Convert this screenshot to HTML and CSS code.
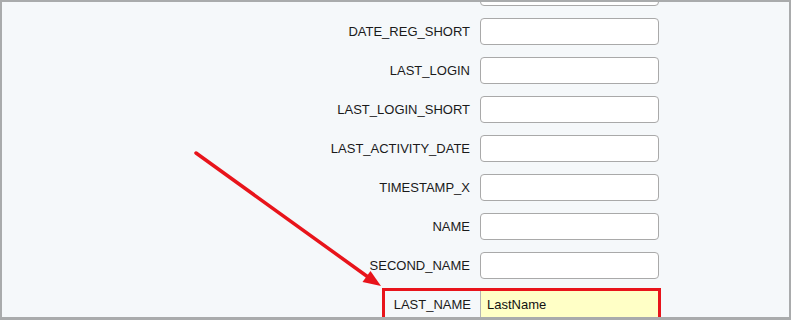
FILE: index.html
```html
<!DOCTYPE html>
<html lang="en">
<head>
    <meta charset="UTF-8">
    <meta name="viewport" content="width=device-width, initial-scale=1">
    <title>User fields</title>
    <link rel="stylesheet" href="styles.css">
</head>
<body>
<div class="frame">
    <div class="fields">
        <div class="row"><label></label><input type="text"></div>
        <div class="row"><label>DATE_REG_SHORT</label><input type="text"></div>
        <div class="row"><label>LAST_LOGIN</label><input type="text"></div>
        <div class="row"><label>LAST_LOGIN_SHORT</label><input type="text"></div>
        <div class="row"><label>LAST_ACTIVITY_DATE</label><input type="text"></div>
        <div class="row"><label>TIMESTAMP_X</label><input type="text"></div>
        <div class="row"><label>NAME</label><input type="text"></div>
        <div class="row"><label>SECOND_NAME</label><input type="text"></div>
        <div class="row row-marked">
            <div class="mark">
                <label>LAST_NAME</label><input type="text" value="LastName">
            </div>
        </div>
    </div>

    <!-- annotation arrow pointing at the marked field -->
    <svg class="arrow" width="791" height="320" viewBox="0 0 791 320">
        <line x1="196" y1="153" x2="368" y2="277" stroke="#e8141b" stroke-width="3.5" stroke-linecap="round"/>
        <polygon points="381,286 370.5,271 362.5,282" fill="#e8141b"/>
    </svg>
</div>
</body>
</html>
```

FILE: styles.css
```css
body {
    margin: 0;
    font-family: "Liberation Sans", Arial, sans-serif;
}

.frame {
    position: relative;
    width: 791px;
    height: 320px;
    box-sizing: border-box;
    border: 2px solid #a9abac;
    border-bottom-width: 3px;
    background-color: #f5f8fa;
    overflow: hidden;
}

.fields {
    margin-top: -29px;
}

.row {
    display: grid;
    grid-template-columns: 478px 179px;
    align-items: center;
    height: 39px;
}

.row label {
    text-align: right;
    padding-right: 10px;
    font-size: 13px;
    color: #1a1a1a;
}

.row input {
    box-sizing: border-box;
    height: 27px;
    width: 179px;
    margin: 0;
    border: 1px solid #a9a9a9;
    border-radius: 4px;
    background-color: #fff;
    font-family: inherit;
    font-size: 13px;
    padding: 0 6px;
}

/* highlighted field */
.row-marked {
    display: block;
}

.mark {
    display: flex;
    margin: 3px 0 0 380px;
    width: 279px;
    box-sizing: border-box;
    border: 3px solid #e8141b;
}

.mark label {
    width: 95px;
    box-sizing: border-box;
    line-height: 27px;
    padding-right: 9px;
}

.mark input {
    width: 178px;
    border: none;
    border-left: 1px solid #b5b5b5;
    border-radius: 0;
    background-color: #ffffc6;
    color: #111;
}

.arrow {
    position: absolute;
    left: -2px;
    top: -2px;
    pointer-events: none;
}
```
